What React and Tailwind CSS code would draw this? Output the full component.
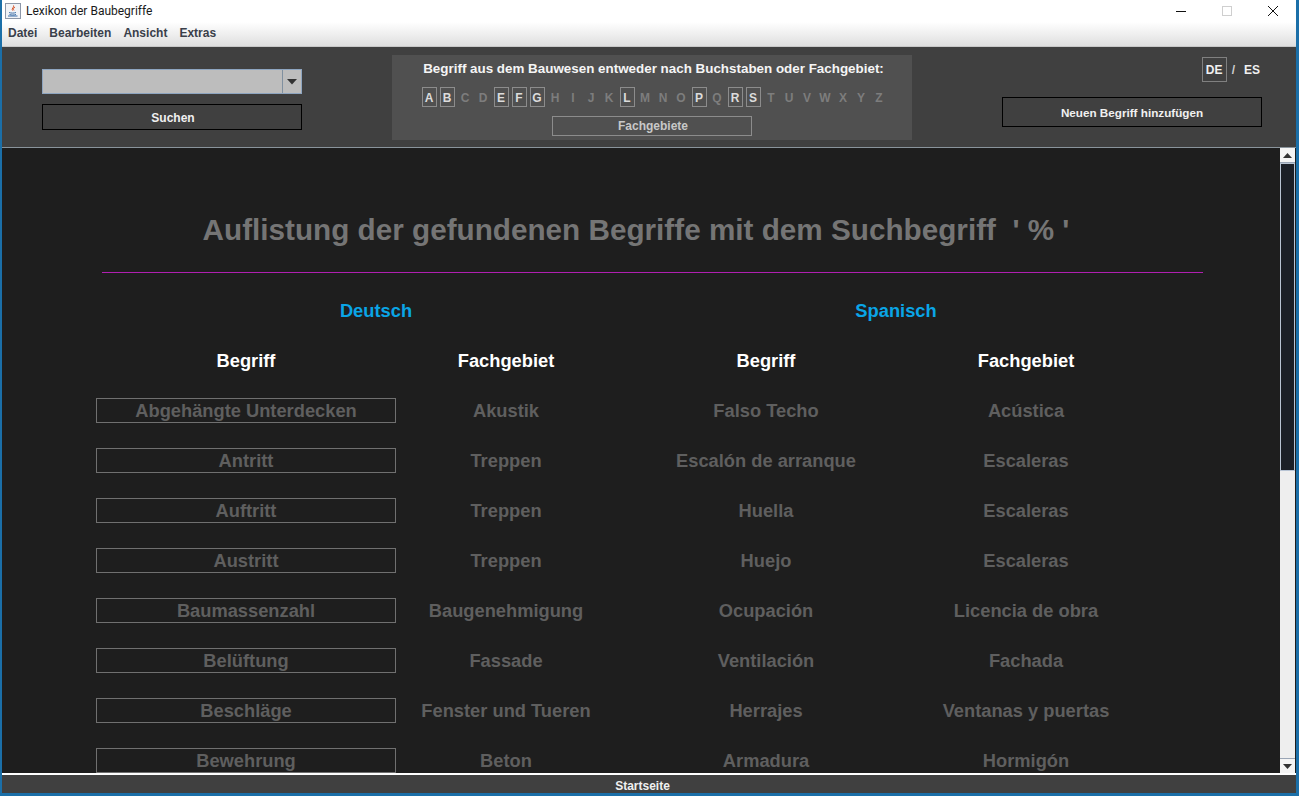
import React from "react";

const rows = [
  ["Abgehängte Unterdecken", "Akustik", "Falso Techo", "Acústica"],
  ["Antritt", "Treppen", "Escalón de arranque", "Escaleras"],
  ["Auftritt", "Treppen", "Huella", "Escaleras"],
  ["Austritt", "Treppen", "Huejo", "Escaleras"],
  ["Baumassenzahl", "Baugenehmigung", "Ocupación", "Licencia de obra"],
  ["Belüftung", "Fassade", "Ventilación", "Fachada"],
  ["Beschläge", "Fenster und Tueren", "Herrajes", "Ventanas y puertas"],
  ["Bewehrung", "Beton", "Armadura", "Hormigón"],
];

const letters = "ABCDEFGHIJKLMNOPQRSTUVWXYZ".split("");
const active = "ABEFGLPRS";

function JavaIcon() {
  return (
    <svg width="16" height="16" viewBox="0 0 16 16" className="shrink-0">
      <rect x="0.5" y="0.5" width="15" height="15" fill="#f1f3f7" stroke="#8d97a8" />
      <path d="M8.5 2.5c1 2-2.500 3-1 5M10 4c-1.500 1-2 2-1 3.500" fill="none" stroke="#d8552b" strokeWidth="1" />
      <path d="M4 9.500c2 .8 5 .8 7 0M4.500 11.500c2 .7 4.500 .7 6.500 0" fill="none" stroke="#3d6fa8" strokeWidth="1" />
      <path d="M3 13h9.500" stroke="#3d6fa8" strokeWidth="1" />
    </svg>
  );
}

function TitleBar() {
  return (
    <div className="h-[22px] bg-white flex items-center pl-[3px] shrink-0">
      <JavaIcon />
      <span className="ml-[5px] text-[12px] text-[#1a1a1a] font-['Roboto',sans-serif]">Lexikon der Baubegriffe</span>
      <div className="ml-auto flex items-center">
        <svg width="12" height="12" viewBox="0 0 12 12" className="mr-[34px]">
          <path d="M1 6.500h10" stroke="#111" />
        </svg>
        <svg width="12" height="12" viewBox="0 0 12 12" className="mr-[34px]">
          <rect x="1.500" y="1.500" width="9" height="9" fill="none" stroke="#cfcfcf" />
        </svg>
        <svg width="12" height="12" viewBox="0 0 12 12" className="mr-[17px]">
          <path d="M1 1l10 10M11 1L1 11" stroke="#111" />
        </svg>
      </div>
    </div>
  );
}

function MenuBar() {
  return (
    <div className="h-[25px] shrink-0 flex items-center gap-[12px] pl-[6px] pb-[2px] text-[12px] font-bold text-[#3a3f4a] bg-gradient-to-b from-white to-[#dfdfdf] border-b border-[#c8c8c8]">
      <span>Datei</span>
      <span>Bearbeiten</span>
      <span>Ansicht</span>
      <span>Extras</span>
    </div>
  );
}

function Header() {
  return (
    <div className="h-[101px] shrink-0 bg-[#404040] flex border-b border-[#8a949c]">
      {/* suche */}
      <div className="w-[260px] ml-[40px] pt-[22px] flex flex-col gap-[10px]">
        <div className="h-[25px] flex bg-[#bdbdbd] border border-[#8ea5c0]">
          <div className="flex-1" />
          <div className="w-[19px] border-l border-[#8090a0] flex items-center justify-center">
            <svg width="10" height="6" viewBox="0 0 10 6"><path d="M0 0h10L5 5.500z" fill="#333" /></svg>
          </div>
        </div>
        <div className="h-[26px] border border-black flex items-center justify-center pl-[2px] pt-[2px] text-[12px] font-bold text-[#f0f0f0]">Suchen</div>
      </div>
      {/* buchstaben */}
      <div className="w-[520px] h-[85px] ml-[90px] mt-[8px] bg-[#505050] flex flex-col items-center">
        <div className="mt-[6px] ml-[3px] h-[16px] leading-[16px] text-[13.4px] font-bold text-[#f5f5f5]">Begriff aus dem Bauwesen entweder nach Buchstaben oder Fachgebiet:</div>
        <div className="mt-[10px] ml-[4px] flex gap-[3px]">
          {letters.map((l) => (
            <div
              key={l}
              className={
                active.includes(l)
                  ? "w-[15px] h-[20px] pt-[2px] border border-[#8c8c8c] flex items-center justify-center text-[12px] font-bold text-[#dcdcdc]"
                  : "w-[15px] h-[20px] pt-[2px] flex items-center justify-center text-[12px] font-bold text-[#7d7d7d]"
              }
            >
              {l}
            </div>
          ))}
        </div>
        <div className="mt-[9px] w-[200px] h-[20px] border border-[#8c8c8c] flex items-center justify-center pl-[2px] text-[12px] font-bold text-[#c8c8c8]">Fachgebiete</div>
      </div>
      {/* rechts */}
      <div className="w-[260px] ml-[90px] pt-[10px] flex flex-col">
        <div className="h-[25px] flex items-center justify-end pr-[2px] text-[12px] font-bold text-[#f0f0f0]">
          <span className="w-[25px] h-[25px] border border-[#808080] flex items-center justify-center">DE</span>
          <span className="ml-[5px] text-[#d0d0d0]">/</span>
          <span className="ml-[9px]">ES</span>
        </div>
        <div className="mt-[15px] h-[30px] border border-black flex items-center justify-center pt-[2px] text-[11.7px] font-bold text-[#f0f0f0]">Neuen Begriff hinzufügen</div>
      </div>
    </div>
  );
}

function Scrollbar() {
  return (
    <div className="w-[16px] shrink-0 flex flex-col bg-[#eeeeee] border-r border-[#1e1e1e]">
      <div className="h-[15px] bg-[#f4f4f4] border-b border-[#9aa5b5] flex items-center justify-center">
        <svg width="9" height="5" viewBox="0 0 9 5"><path d="M0 5h9L4.500 0z" fill="#333" /></svg>
      </div>
      <div className="h-[308px] bg-[#1b1f27] border border-[#b8c4d4]" />
      <div className="flex-1" />
      <div className="h-[15px] bg-[#f4f4f4] border-t border-[#9aa5b5] flex items-center justify-center">
        <svg width="9" height="5" viewBox="0 0 9 5"><path d="M0 0h9L4.500 5z" fill="#333" /></svg>
      </div>
    </div>
  );
}

function Content() {
  return (
    <div className="flex-1 min-h-0 flex overflow-hidden border-b-2 border-white">
      <div className="flex-1 bg-[#1e1e1e] overflow-hidden">
        <div className="w-[1040px] ml-[114px] font-bold">
          <div className="mt-[64px] h-[36px] leading-[36px] text-center text-[29.7px] text-[#757575] whitespace-pre">Auflistung der gefundenen Begriffe mit dem Suchbegriff  ' % '</div>
          <div className="mt-[24px] ml-[-14px] w-[1101px] h-px bg-[#b01fb0]" />
          <div className="mt-[27px] grid grid-cols-2 text-[18.3px] text-[#0aa5e6] text-center h-[22px] leading-[22px]">
            <div>Deutsch</div>
            <div>Spanisch</div>
          </div>
          <div className="mt-[28px] grid grid-cols-4 text-[18.3px] text-white text-center h-[22px] leading-[22px]">
            <div>Begriff</div>
            <div>Fachgebiet</div>
            <div>Begriff</div>
            <div>Fachgebiet</div>
          </div>
          <div className="mt-[26px] flex flex-col gap-[25px] text-[18.3px] text-[#5f5f5f]">
            {rows.map((r) => (
              <div key={r[0]} className="grid grid-cols-4 h-[25px] leading-[26px] text-center">
                <div className="flex justify-center">
                  <div className="w-[300px] shrink-0 h-[25px] border border-[#707070] leading-[24px]">{r[0]}</div>
                </div>
                <div>{r[1]}</div>
                <div>{r[2]}</div>
                <div>{r[3]}</div>
              </div>
            ))}
          </div>
        </div>
      </div>
      <Scrollbar />
    </div>
  );
}

export default function App() {
  return (
    <div className="w-[1299px] h-[796px] overflow-hidden flex flex-col bg-white border-l-2 border-r-[3px] border-b-[3px] border-[#1b6fa8] font-['Liberation_Sans',Arial,sans-serif]">
      <TitleBar />
      <MenuBar />
      <Header />
      <Content />
      <div className="h-[18px] shrink-0 bg-[#404040] flex items-center justify-center pt-[3px] pr-[13px] text-[12px] font-bold text-[#f0f0f0]">Startseite</div>
    </div>
  );
}
